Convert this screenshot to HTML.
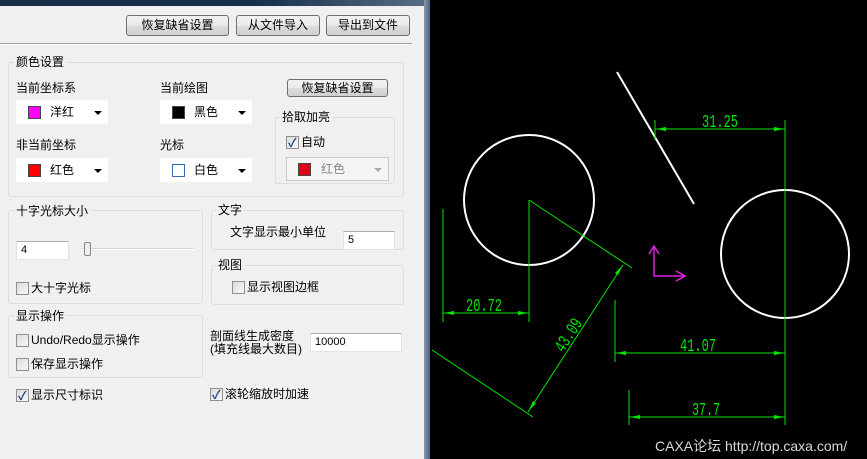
<!DOCTYPE html>
<html><head><meta charset="utf-8"><style>
*{margin:0;padding:0;box-sizing:border-box}
body{width:867px;height:459px;overflow:hidden;background:#000;position:relative;font-family:"Liberation Sans","Noto Sans CJK SC",sans-serif;font-size:12px;color:#000}
.a{position:absolute}
#panel{left:0;top:0;width:426px;height:459px;background:#f0f0f0}
#top{left:0;top:0;width:430px;height:6px;background:linear-gradient(90deg,#1a2f4a,#16304d 60%,#5b6f86)}
#edge{left:424px;top:0;width:6px;height:459px;background:linear-gradient(90deg,#8a9bb0,#4d627c)}
.btn{position:absolute;border:1px solid #707070;border-radius:3px;background:linear-gradient(#f2f2f2,#ebebeb 50%,#dddddd 51%,#cfcfcf);text-align:center;line-height:19px;font-size:12px}
.grp{position:absolute;border:1px solid #d5dfe5;border-radius:3px}
.gt{position:absolute;background:#f0f0f0;padding:0 2px;line-height:14px}
.lbl{position:absolute;line-height:14px;white-space:nowrap}
.combo{position:absolute;background:#fff;width:92px;height:24px}
.combo .sw{position:absolute;left:12px;top:6px;width:13px;height:13px;border:1px solid #444}
.combo .t{position:absolute;left:34px;top:5px;line-height:14px}
.combo .ar{position:absolute;right:6px;top:11px;width:0;height:0;border-left:4px solid transparent;border-right:4px solid transparent;border-top:4px solid #000}
.cb{position:absolute;width:13px;height:13px;border:1px solid #8f8f8f;background:linear-gradient(135deg,#dcdcdc,#f8f8f8)}
.cb.on::after{content:"✓";position:absolute;left:1px;top:-3px;font-size:12px;color:#2a4a8a;font-weight:bold}
.inp{position:absolute;background:#fff;border:1px solid #e2e3ea;border-top-color:#abadb3;font-size:11px;padding-left:4px;line-height:17px}
</style></head><body>
<div class="a" id="panel"></div>
<div class="a" id="top"></div>
<div class="a" id="edge"></div>
<div class="btn" style="left:126px;top:15px;width:103px;height:21px">恢复缺省设置</div>
<div class="btn" style="left:236px;top:15px;width:84px;height:21px">从文件导入</div>
<div class="btn" style="left:326px;top:15px;width:84px;height:21px">导出到文件</div>
<div class="a" style="left:0;top:43px;width:412px;height:1px;background:#a0a0a0"></div>
<div class="a" style="left:0;top:44px;width:412px;height:1px;background:#fff"></div>

<div class="grp" style="left:8px;top:62px;width:396px;height:135px"></div>
<div class="gt" style="left:14px;top:55px">颜色设置</div>
<div class="lbl" style="left:16px;top:81px">当前坐标系</div>
<div class="lbl" style="left:160px;top:81px">当前绘图</div>
<div class="combo" style="left:16px;top:100px"><div class="sw" style="background:#f0f"></div><div class="t">洋红</div><div class="ar"></div></div>
<div class="combo" style="left:160px;top:100px"><div class="sw" style="background:#000"></div><div class="t">黑色</div><div class="ar"></div></div>
<div class="lbl" style="left:16px;top:138px">非当前坐标</div>
<div class="lbl" style="left:160px;top:138px">光标</div>
<div class="combo" style="left:16px;top:158px"><div class="sw" style="background:#f00"></div><div class="t">红色</div><div class="ar"></div></div>
<div class="combo" style="left:160px;top:158px"><div class="sw" style="background:#fff;border-color:#3a6ab0"></div><div class="t">白色</div><div class="ar"></div></div>
<div class="btn" style="left:287px;top:79px;width:101px;height:18px;line-height:16px">恢复缺省设置</div>
<div class="grp" style="left:275px;top:117px;width:120px;height:67px"></div>
<div class="gt" style="left:280px;top:110px">拾取加亮</div>
<div class="cb on" style="left:286px;top:136px"></div>
<div class="lbl" style="left:301px;top:135px">自动</div>
<div class="combo" style="left:286px;top:157px;width:103px;border:1px solid #c9c9c9;background:#f4f4f4"><div class="sw" style="background:#e0001a;left:11px;top:5px"></div><div class="t" style="color:#888;top:4px">红色</div><div class="ar" style="border-top-color:#aaa;top:10px"></div></div>

<div class="grp" style="left:8px;top:210px;width:195px;height:94px"></div>
<div class="gt" style="left:14px;top:204px">十字光标大小</div>
<div class="inp" style="left:16px;top:241px;width:53px;height:19px">4</div>
<div class="a" style="left:82px;top:248px;width:112px;height:2px;background:#d6d6d6;border-bottom:1px solid #fff"></div>
<div class="a" style="left:84px;top:242px;width:7px;height:14px;border:1px solid #888;border-radius:2px;background:#eee"></div>
<div class="cb" style="left:16px;top:282px"></div>
<div class="lbl" style="left:31px;top:281px">大十字光标</div>

<div class="grp" style="left:211px;top:210px;width:193px;height:40px"></div>
<div class="gt" style="left:216px;top:203px">文字</div>
<div class="lbl" style="left:230px;top:225px">文字显示最小单位</div>
<div class="inp" style="left:343px;top:231px;width:52px;height:19px">5</div>
<div class="grp" style="left:211px;top:265px;width:193px;height:40px"></div>
<div class="gt" style="left:216px;top:258px">视图</div>
<div class="cb" style="left:232px;top:281px"></div>
<div class="lbl" style="left:247px;top:280px">显示视图边框</div>

<div class="grp" style="left:8px;top:315px;width:195px;height:63px"></div>
<div class="gt" style="left:14px;top:309px">显示操作</div>
<div class="cb" style="left:16px;top:334px"></div>
<div class="lbl" style="left:31px;top:333px;font-size:12px">Undo/Redo显示操作</div>
<div class="cb" style="left:16px;top:358px"></div>
<div class="lbl" style="left:31px;top:357px">保存显示操作</div>
<div class="lbl" style="left:210px;top:330px;line-height:13px">剖面线生成密度<br>(填充线最大数目)</div>
<div class="inp" style="left:310px;top:333px;width:92px;height:19px">10000</div>
<div class="cb on" style="left:16px;top:389px"></div>
<div class="lbl" style="left:31px;top:388px">显示尺寸标识</div>
<div class="cb on" style="left:210px;top:388px"></div>
<div class="lbl" style="left:225px;top:387px">滚轮缩放时加速</div>

<svg class="a" style="left:0;top:0" width="867" height="459">
<g stroke="#fff" stroke-width="2" fill="none">
<line x1="617" y1="72" x2="694" y2="204"/>
<circle cx="529" cy="200" r="65"/>
<circle cx="785" cy="254" r="64"/>
</g>
<g stroke="#00e600" stroke-width="1" fill="none">
<line x1="785" y1="120" x2="785" y2="425"/>
<line x1="655" y1="120" x2="655" y2="140"/>
<line x1="655" y1="129" x2="785" y2="129"/>
<line x1="443" y1="209" x2="443" y2="322"/>
<line x1="529" y1="200" x2="529" y2="322"/>
<line x1="443" y1="313" x2="529" y2="313"/>
<line x1="529" y1="200" x2="632" y2="268"/>
<line x1="432" y1="350" x2="533" y2="417"/>
<line x1="623" y1="265" x2="528" y2="412"/>
<line x1="615" y1="300" x2="615" y2="362"/>
<line x1="615" y1="353" x2="785" y2="353"/>
<line x1="629" y1="390" x2="629" y2="425"/>
<line x1="629" y1="417" x2="785" y2="417"/>
</g>
<g fill="#00e600">
<polygon points="656,129 666,127 666,131"/><polygon points="784,129 774,127 774,131"/>
<polygon points="444,313 454,311 454,315"/><polygon points="528,313 518,311 518,315"/>
<polygon points="616,353 626,351 626,355"/><polygon points="784,353 774,351 774,355"/>
<polygon points="630,417 640,415 640,419"/><polygon points="784,417 774,415 774,419"/>
<polygon points="623,265 615,273 618,275"/><polygon points="528,412 533,401 536,403"/>
</g>
<g fill="#00e600" font-family="Liberation Mono,monospace" font-size="18">
<text x="702" y="127" textLength="36" lengthAdjust="spacingAndGlyphs">31.25</text>
<text x="466" y="311" textLength="36" lengthAdjust="spacingAndGlyphs">20.72</text>
<text x="680" y="351" textLength="36" lengthAdjust="spacingAndGlyphs">41.07</text>
<text x="692" y="415" textLength="28" lengthAdjust="spacingAndGlyphs">37.7</text>
<text transform="translate(573,338) rotate(-57)" x="-18" y="0" textLength="36" lengthAdjust="spacingAndGlyphs">43.09</text>
</g>
<g stroke="#e020e0" stroke-width="1.5" fill="none">
<polyline points="654,246 654,276 685,276"/>
<polyline points="649,254 654,246 659,254"/>
<polyline points="676,271 685,276 676,281"/>
</g>
<text x="655" y="451" fill="#d8d8d8" font-family="Liberation Sans,Noto Sans CJK SC,sans-serif" font-size="14">CAXA论坛 http://top.caxa.com/</text>
</svg>
</body></html>
